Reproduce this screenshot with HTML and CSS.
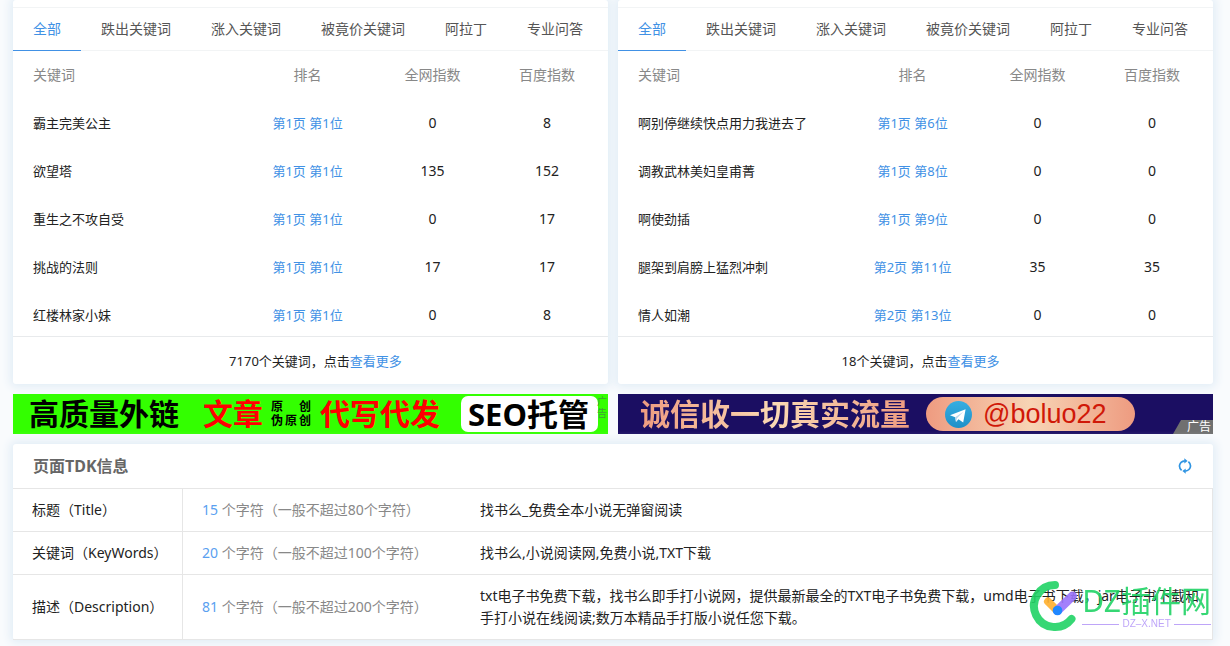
FILE: index.html
```html
<!DOCTYPE html>
<html lang="zh-CN">
<head>
<meta charset="utf-8">
<title>页面TDK信息</title>
<link rel="stylesheet" href="styles.css">
</head>
<body>
<main class="page">
  <div class="pair">
    <section class="card keywords">
      <nav class="tabs">
        <button class="tab tab-active" type="button">全部</button>
        <button class="tab" type="button">跌出关键词</button>
        <button class="tab" type="button">涨入关键词</button>
        <button class="tab" type="button">被竟价关键词</button>
        <button class="tab" type="button">阿拉丁</button>
        <button class="tab" type="button">专业问答</button>
      </nav>
      <table class="rank">
        <thead><tr><th class="name">关键词</th><th class="place">排名</th><th class="index">全网指数</th><th class="baidu">百度指数</th></tr></thead>
        <tbody>
          <tr><td class="name">霸主完美公主</td><td><a href="#">第1页 第1位</a></td><td>0</td><td>8</td></tr>
          <tr><td class="name">欲望塔</td><td><a href="#">第1页 第1位</a></td><td>135</td><td>152</td></tr>
          <tr><td class="name">重生之不攻自受</td><td><a href="#">第1页 第1位</a></td><td>0</td><td>17</td></tr>
          <tr><td class="name">挑战的法则</td><td><a href="#">第1页 第1位</a></td><td>17</td><td>17</td></tr>
          <tr><td class="name">红楼林家小妹</td><td><a href="#">第1页 第1位</a></td><td>0</td><td>8</td></tr>
        </tbody>
      </table>
      <p class="more">7170个关键词，点击<a href="#">查看更多</a></p>
    </section>
    <section class="card keywords">
      <nav class="tabs">
        <button class="tab tab-active" type="button">全部</button>
        <button class="tab" type="button">跌出关键词</button>
        <button class="tab" type="button">涨入关键词</button>
        <button class="tab" type="button">被竟价关键词</button>
        <button class="tab" type="button">阿拉丁</button>
        <button class="tab" type="button">专业问答</button>
      </nav>
      <table class="rank">
        <thead><tr><th class="name">关键词</th><th class="place">排名</th><th class="index">全网指数</th><th class="baidu">百度指数</th></tr></thead>
        <tbody>
          <tr><td class="name">啊别停继续快点用力我进去了</td><td><a href="#">第1页 第6位</a></td><td>0</td><td>0</td></tr>
          <tr><td class="name">调教武林美妇皇甫菁</td><td><a href="#">第1页 第8位</a></td><td>0</td><td>0</td></tr>
          <tr><td class="name">啊使劲插</td><td><a href="#">第1页 第9位</a></td><td>0</td><td>0</td></tr>
          <tr><td class="name">腿架到肩膀上猛烈冲刺</td><td><a href="#">第2页 第11位</a></td><td>35</td><td>35</td></tr>
          <tr><td class="name">情人如潮</td><td><a href="#">第2页 第13位</a></td><td>0</td><td>0</td></tr>
        </tbody>
      </table>
      <p class="more">18个关键词，点击<a href="#">查看更多</a></p>
    </section>
  </div>

  <div class="pair">
    <a class="banner banner-green" href="#">
      <span class="big">高质量外链</span>
      <span class="big red">文章</span>
      <span class="small">
        <span class="small-row"><span>原</span><span>创</span></span>
        <span class="small-row"><span>伪</span><span>原</span><span>创</span></span>
      </span>
      <span class="big red">代写代发</span>
      <span class="big seo">SEO托管</span>
      <span class="side-mark">广<br>告</span>
    </a>
    <a class="banner banner-navy" href="#">
      <span class="slogan">诚信收一切真实流量</span>
      <span class="pill">
        <svg width="27" height="27" viewBox="0 0 27 27" aria-hidden="true">
          <defs><linearGradient id="sky" x1="0" y1="0" x2="0" y2="1"><stop offset="0" stop-color="#37aee2"/><stop offset="1" stop-color="#1e90c8"/></linearGradient></defs>
          <circle cx="13.500" cy="13.500" r="13.500" fill="url(#sky)"/>
          <path d="M5 14.300 20.600 8.200 18.200 21.600 13.500 18.300 11 21 10.200 16.300Z" fill="#fff"/>
          <path d="M10.200 16.300 18.300 10.700 12 17.200 11 21Z" fill="#b9d5ea"/>
        </svg>
        <span class="handle">@boluo22</span>
      </span>
      <span class="ad-mark">广告</span>
    </a>
  </div>

  <section class="card tdk">
    <header class="tdk-head">
      <h2>页面TDK信息</h2>
      <button class="refresh" type="button" aria-label="刷新">
        <svg width="14" height="16" viewBox="0 0 14 16" fill="none" stroke="#2f94e2" stroke-width="1.700" aria-hidden="true">
          <path d="M3.600 12.400C.2 9.500 .8 3.800 6.800 2.900"/>
          <path d="M10.400 3.600C13.800 6.500 13.200 12.200 7.200 13.100"/>
          <path d="M6.300 .2 9.600 2.900 6.300 5.400Z" fill="#2f94e2" stroke="none"/>
          <path d="M7.700 10.600 4.400 13.100 7.700 15.800Z" fill="#2f94e2" stroke="none"/>
        </svg>
      </button>
    </header>
    <table class="tdk-table">
      <tbody>
        <tr><th>标题（Title）</th><td class="count"><b>15</b> 个字符（一般不超过80个字符）</td><td>找书么_免费全本小说无弹窗阅读</td></tr>
        <tr><th>关键词（KeyWords）</th><td class="count"><b>20</b> 个字符（一般不超过100个字符）</td><td>找书么,小说阅读网,免费小说,TXT下载</td></tr>
        <tr><th>描述（Description）</th><td class="count"><b>81</b> 个字符（一般不超过200个字符）</td><td>txt电子书免费下载，找书么即手打小说网，提供最新最全的TXT电子书免费下载，umd电子书下载，jar电子书下载和手打小说在线阅读;数万本精品手打版小说任您下载。</td></tr>
      </tbody>
    </table>
    <div class="watermark">
      <svg width="49" height="52" viewBox="0 0 49 52" fill="none" stroke-linecap="round" aria-hidden="true">
        <path d="M26 5A21 21 0 1 0 42.500 39" stroke="#21d366" stroke-width="8"/>
        <path d="M19 21.500 28 30.500" stroke="#ffb02e" stroke-width="8"/>
        <path d="M28.500 30.500 43.500 16" stroke="#9a73fb" stroke-width="9"/>
        <circle cx="28.500" cy="30.500" r="4.800" fill="#0a7cff"/>
      </svg>
      <div class="mark-text">
        <span class="mark-name">DZ插件网</span>
        <span class="mark-site">DZ–X.NET</span>
      </div>
    </div>
  </section>
</main>
</body>
</html>
```
FILE: styles.css
```css
* { box-sizing: border-box; }

body {
  margin: 0;
  background: #f9fbfd;
  color: #222;
  font: 14px/20px "Noto Sans", "Noto Sans CJK SC", sans-serif;
}

a { color: #4191e5; text-decoration: none; }
button { border: 0; background: none; padding: 0; font: inherit; cursor: pointer; }

.page {
  display: flex;
  flex-direction: column;
  gap: 10px;
  padding: 0 17px 6px 13px;
  overflow: hidden;
}

.pair { display: grid; grid-template-columns: 1fr 1fr; gap: 10px; }

.card {
  background: #fff;
  border-radius: 3px;
  box-shadow: 0 0 10px 3px #e2edf6;
}

.keywords { padding-top: 7px; }

.tabs {
  display: flex;
  border-top: 1px solid #f2f4f5;
  border-bottom: 1px solid #f2f4f5;
}
.tab {
  margin-bottom: -1px;
  padding: 11px 20px;
  border-bottom: 1px solid transparent;
  color: #555;
  white-space: nowrap;
}
.tab-active { border-color: #4191e5; color: #4191e5; }

.rank { width: 100%; border-collapse: collapse; table-layout: fixed; }
.rank th, .rank td { padding: 14px 0; text-align: center; font-weight: 400; }
.rank th { color: #888; }
.rank .name { padding-left: 20px; text-align: left; white-space: nowrap; }
.rank td.name, .rank td a { font-size: 13px; }
.rank tr:last-child td { padding-bottom: 11px; }
.rank .place { width: 24%; }
.rank .index { width: 18%; }
.rank .baidu { width: 20.5%; }

.more {
  margin: 0;
  padding: 14px 0 13px 10px;
  border-top: 1px solid #e8eaec;
  text-align: center;
  font-size: 13px;
}

.banner {
  position: relative;
  display: flex;
  align-items: center;
  height: 40px;
  overflow: hidden;
  white-space: nowrap;
}
.banner-green { padding: 0 10px 0 16px; background: #3f0; color: #000; }
.big { font-size: 30px; line-height: 40px; font-weight: 700; }
.red { margin-left: 9px; color: #f00; }
.big + .red { margin-left: 24px; }
.small { width: 40px; margin-left: 8px; font-size: 12px; line-height: 14px; font-weight: 700; }
.small-row { display: flex; justify-content: space-between; }
.seo {
  margin-left: auto;
  padding: 0 9px 0 7px;
  border-radius: 7px;
  background: #fff;
  font-size: 31px;
  line-height: 36px;
}
.side-mark {
  position: absolute;
  top: 1px;
  right: 1px;
  color: #40a238;
  font-size: 10px;
  line-height: 12px;
}

.banner-navy { gap: 16px; padding-left: 22px; background: #1b0e62; }
.slogan {
  background: linear-gradient(90deg, #ee9b80, #fad9b4 50%, #ee9b80);
  background-clip: text;
  color: transparent;
  font-size: 30px;
  line-height: 40px;
  font-weight: 700;
}
.pill {
  display: flex;
  align-items: center;
  gap: 11px;
  height: 34px;
  padding: 0 28px 0 19px;
  border-radius: 17px;
  background: linear-gradient(90deg, #ee9b80, #f7d4b5 50%, #ee9b80);
}
.handle {
  color: #d01808;
  font: 27px/34px "Liberation Sans", Arial, sans-serif;
}
.ad-mark {
  position: absolute;
  right: 0;
  bottom: 0;
  padding: 0 2px 0 14px;
  background: #707070;
  clip-path: polygon(8px 0, 100% 0, 100% 100%, 0 100%);
  color: #fff;
  font-size: 12px;
  line-height: 14px;
}

.tdk { position: relative; }
.tdk-head {
  display: flex;
  align-items: center;
  justify-content: space-between;
  padding: 11px 21px 11px 20px;
}
.tdk-head h2 { margin: 0; color: #666; font-size: 16px; line-height: 22px; font-weight: 700; }
.refresh { display: flex; }

.tdk-table { width: 100%; border-collapse: separate; border-spacing: 0; border-top: 1px solid #e6e6e6; border-right: 1px solid #e6e6e6; }
.tdk-table th, .tdk-table td {
  padding: 10px 10px 10px 20px;
  border-bottom: 1px solid #e6e6e6;
  line-height: 22px;
  text-align: left;
  font-weight: 400;
}
.tdk-table th { width: 170px; padding: 10px 0 10px 19px; border-right: 1px solid #e6e6e6; white-space: nowrap; }
.tdk-table .count { width: 277px; padding: 10px 0 10px 19px; color: #888; white-space: nowrap; }
.count b { color: #5a9ff0; font-weight: 400; }

.watermark {
  position: absolute;
  right: 2px;
  bottom: 8px;
  display: flex;
  align-items: center;
  gap: 4px;
  opacity: .9;
}
.mark-text { display: flex; flex-direction: column; }
.mark-name { color: #21d366; font-size: 30px; line-height: 36px; }
.mark-site {
  display: flex;
  align-items: center;
  gap: 3px;
  color: #b79cf8;
  font: 10px/10px "Liberation Sans", Arial, sans-serif;
}
.mark-site::before, .mark-site::after { content: ""; flex: 1; height: 1px; background: #b79cf8; }
```
